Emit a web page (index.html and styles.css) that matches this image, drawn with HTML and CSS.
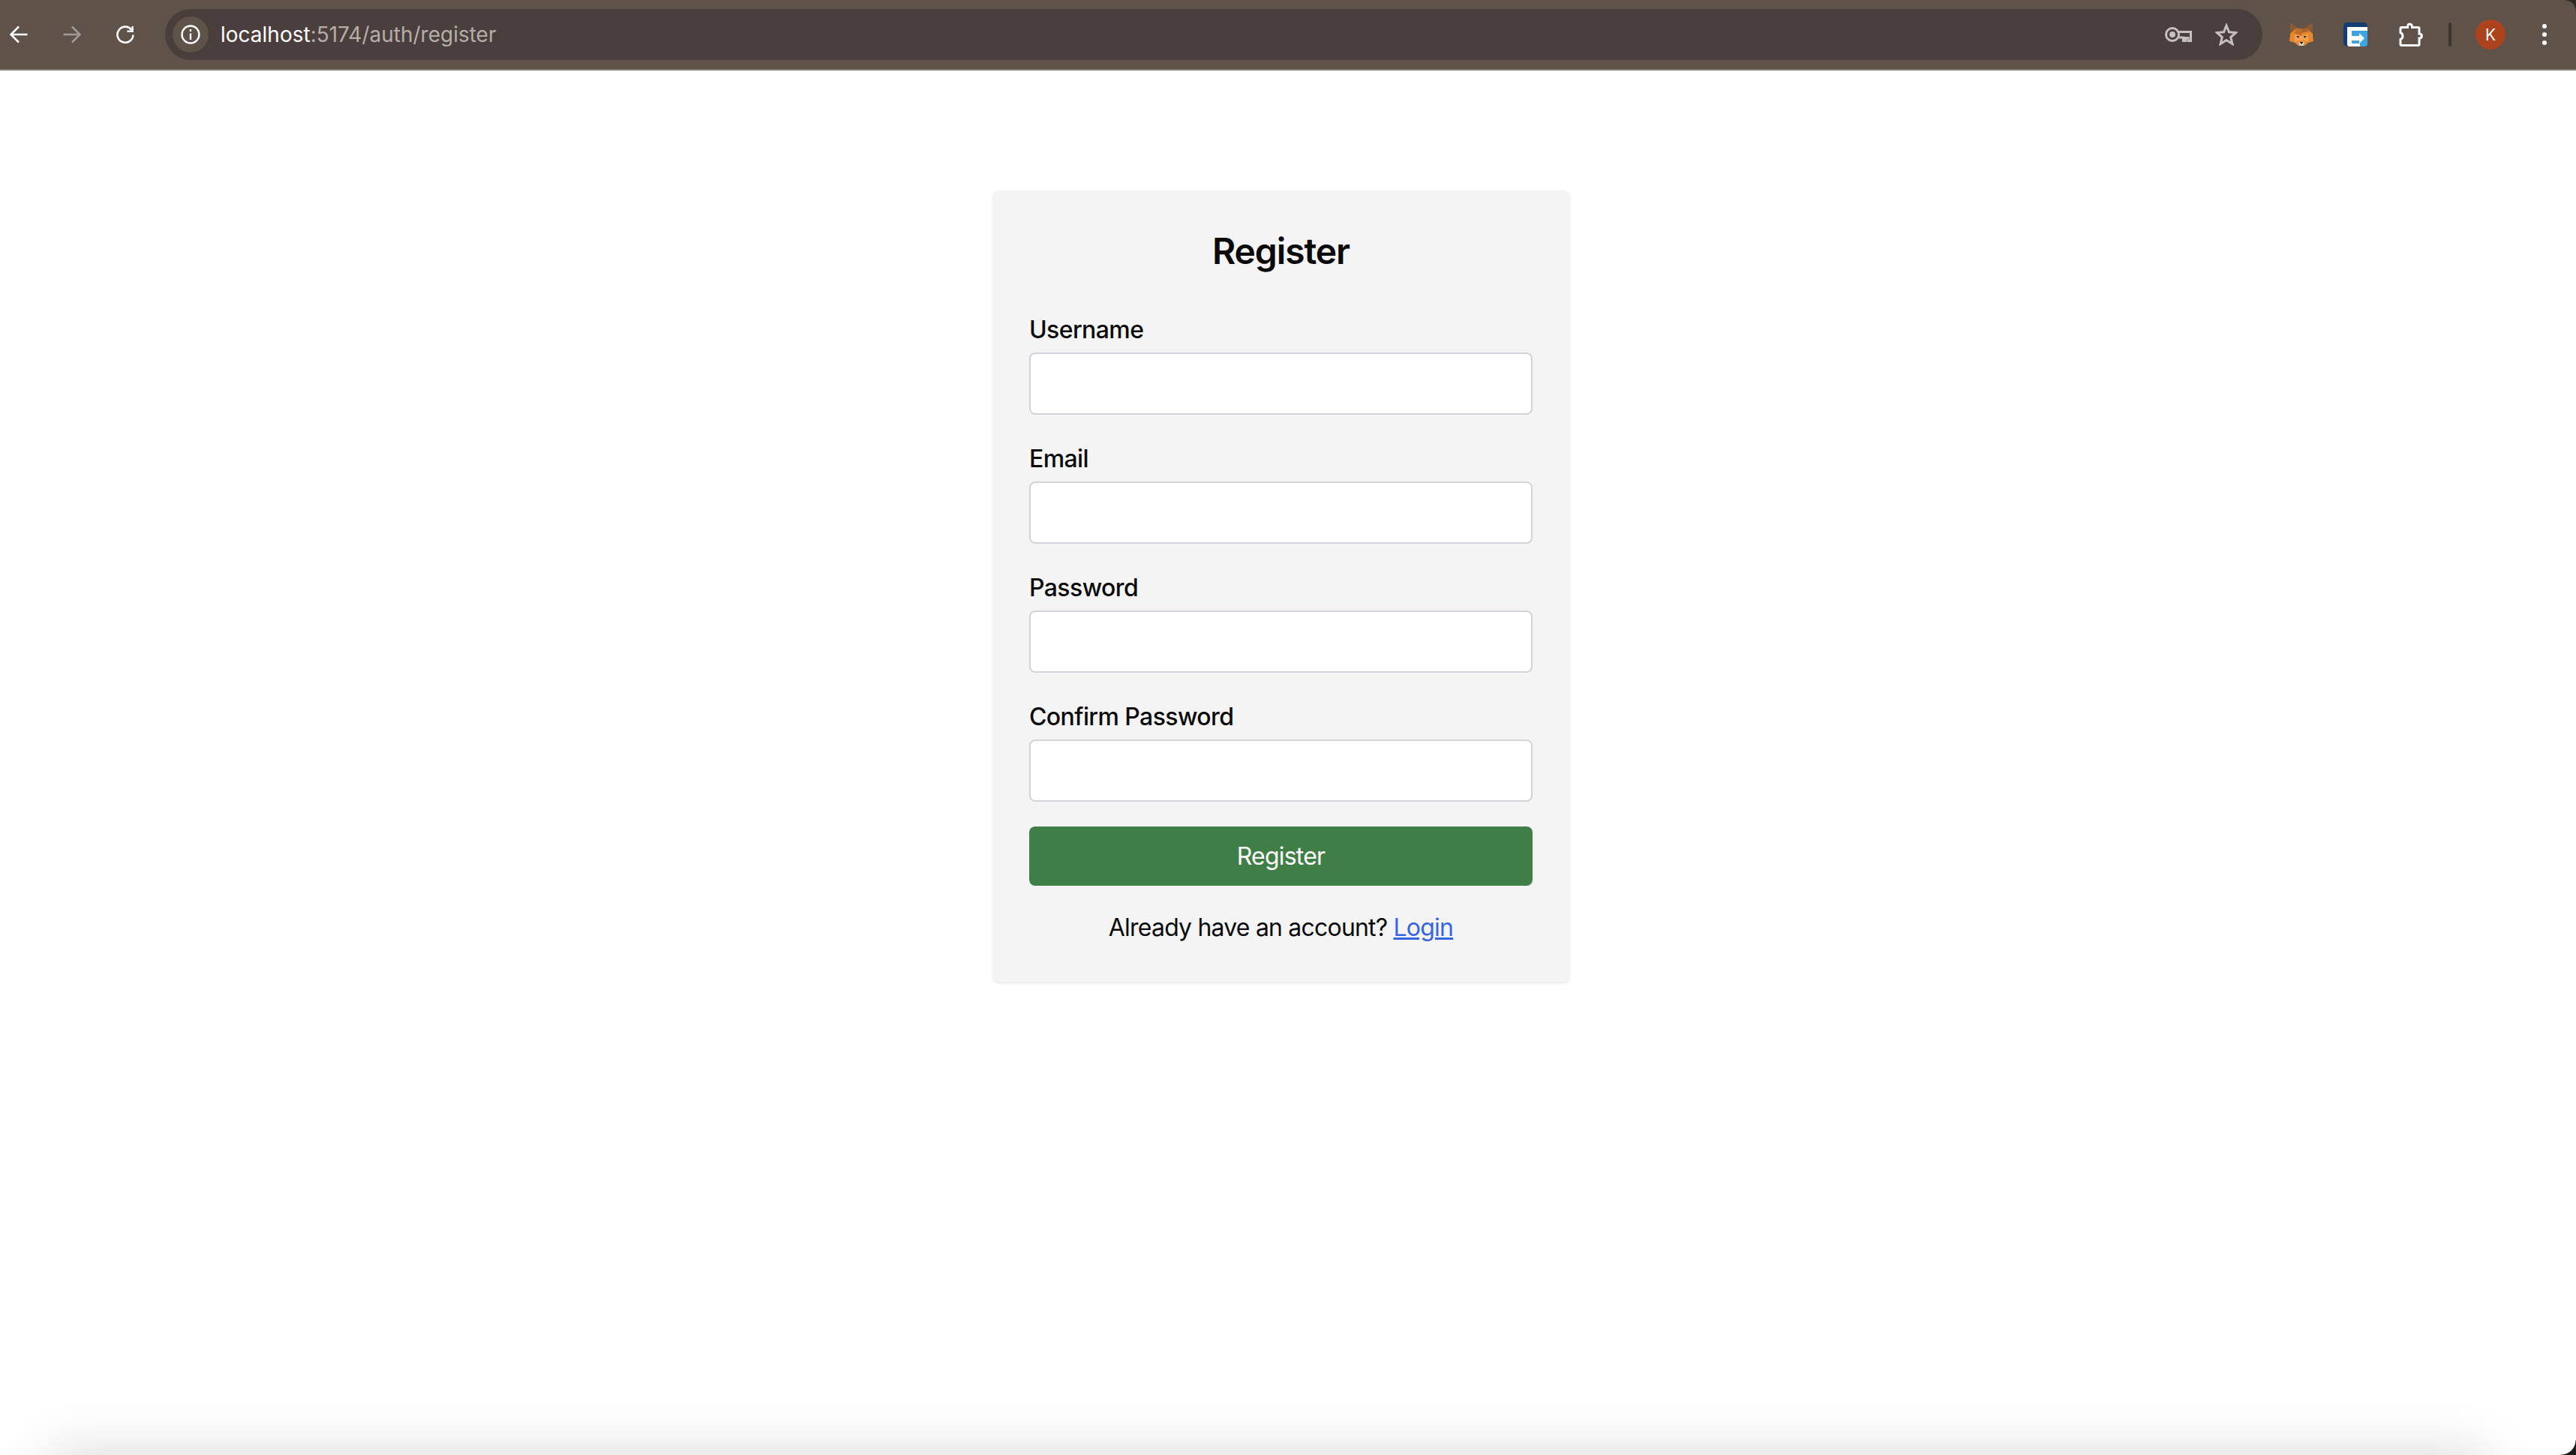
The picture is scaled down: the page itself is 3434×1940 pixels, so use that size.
FILE: index.html
```html
<!DOCTYPE html>
<html lang="en">
  <head>
    <meta charset="UTF-8" />
    <meta name="viewport" content="width=device-width, initial-scale=1.0" />
    <title>Register</title>
    <link rel="stylesheet" href="styles.css">
  </head>
  <body>
    <header class="toolbar">
      <div class="nav-buttons">
        <svg class="nav-icon" viewBox="0 0 24 24" width="24" height="24">
          <path d="M23.500 12H2M12 1.500 1.500 12 12 22.500" />
        </svg>
        <svg class="nav-icon nav-icon-off" viewBox="0 0 24 24" width="24" height="24">
          <path d="M.5 12H22M12 1.500 22.500 12 12 22.500" />
        </svg>
        <svg class="nav-icon" viewBox="0 0 24 24" width="24" height="24">
          <path d="M20.500 6A10.500 10.500 0 1 0 22.500 12.500" />
          <path class="reload-head" d="M23 1V9H14.500V6.500H20.500V1Z" />
        </svg>
      </div>

      <div class="omnibox">
        <span class="site-chip">
          <svg viewBox="0 0 26 26" width="26" height="26" class="info-icon">
            <circle cx="13" cy="13" r="11.500" />
            <path d="M13 11.500V20M13 6V9" />
          </svg>
        </span>
        <span class="url"><span class="url-host">localhost</span>:5174/auth/register</span>
        <span class="omnibox-actions">
          <svg viewBox="0 0 36 22" width="36" height="22" class="omni-icon">
            <circle cx="10" cy="11" r="8.500" />
            <circle class="key-dot" cx="10" cy="11" r="4" />
            <path d="M18.500 7.500H34.500V19.500H31V15.500H27.500V19.500H24.500V15H18.500" />
          </svg>
          <svg viewBox="0 0 30 30" width="30" height="30" class="omni-icon">
            <path d="M15 3 18.500 11.800 27.800 12.500 20.700 18.500 22.900 27.500 15 22.600 7.100 27.500 9.300 18.500 2.200 12.500 11.500 11.800Z" />
          </svg>
        </span>
      </div>

      <div class="extensions">
        <svg class="ext-icon ext-fox" viewBox="0 0 32 32" width="32" height="32">
          <path fill="#8a5a33" d="M1 0 13 8H19L31 0 31 15 16 17 1 15Z" />
          <path fill="#e8872c" d="M1 15 9 8H23L31 15 32 25 25 27 20 31H12L7 27 0 25Z" />
          <path fill="#c46d25" d="M9 8H16V18L6 15Z" />
          <path fill="#a9652c" d="M23 8H16V14L26 12Z" />
          <path fill="#f0a050" d="M16 18 25 15 25 26 19 24H13L7 26 7 15Z" />
          <path fill="#2c2a28" d="M9 18 13 18 12 21ZM23 18 19 18 20 21Z" />
          <path fill="#d9d2c8" d="M12 26H20L18.500 31H13.500Z" />
          <path fill="#1f1b18" d="M13.500 26H18.500L16 29Z" />
        </svg>
        <svg class="ext-icon ext-arrow" viewBox="0 0 32 32" width="32" height="32">
          <rect width="32" height="32" rx="5" fill="#123f73" />
          <path fill="#3fa3e0" d="M11 11H32V28A4 4 0 0 1 28 32H11Z" />
          <path fill="#fff" d="M5 6H32V11H11V28H22V32H8A3 3 0 0 1 5 29Z" />
          <path fill="#fff" d="M11 18H21V14L28 21 21 28V24H11Z" />
        </svg>
        <svg class="puzzle-icon" viewBox="0 0 32 32" width="32" height="32">
          <path d="M3.500 6.500H11.500C11.500 .5 17.500 .5 17.500 6.500H25.500C26.500 6.500 27 7 27 8V15C31.500 15 31.500 21 27 21V29C27 30 26.500 30.500 25.500 30.500H3.500C2.500 30.500 2 30 2 29V22.500C6 21 6 15 2 13.500V8C2 7 2.500 6.500 3.500 6.500Z" />
        </svg>
        <span class="ext-divider"></span>
        <span class="avatar">K</span>
        <span class="menu-dots"><i></i><i></i><i></i></span>
      </div>
    </header>

    <main class="page">
      <form class="card">
        <h2 class="card-title">Register</h2>
        <div class="field">
          <label for="username">Username</label>
          <input id="username" type="text" />
        </div>
        <div class="field">
          <label for="email">Email</label>
          <input id="email" type="email" />
        </div>
        <div class="field">
          <label for="password">Password</label>
          <input id="password" type="password" />
        </div>
        <div class="field field-last">
          <label for="confirm">Confirm Password</label>
          <input id="confirm" type="password" />
        </div>
        <button type="button" class="submit">Register</button>
        <p class="login-line">Already have an account? <a href="#">Login</a></p>
      </form>
    </main>

    <div class="bottom-shade"></div>
    <div class="corner corner-top"></div>
    <div class="corner corner-bottom"></div>
  </body>
</html>
```

FILE: styles.css
```css
* {
  box-sizing: border-box;
  margin: 0;
  padding: 0;
}
html,
body {
  height: 100%;
}
body {
  position: relative;
  overflow: hidden;
  background: #fff;
  color: #0a0a0a;
  font-family: Inter, "Liberation Sans", sans-serif;
}

.toolbar {
  display: flex;
  align-items: center;
  height: 94px;
  background: #5f5249;
  border-bottom: 2px solid #85796f;
}
.nav-buttons {
  display: flex;
  align-items: center;
  gap: 47px;
  width: 220px;
  padding-left: 13px;
}
.nav-icon {
  flex: none;
  fill: none;
  stroke: #fff;
  stroke-width: 2.600;
}
.nav-icon-off {
  stroke: #a39a92;
}
.reload-head {
  fill: #fff;
  stroke: none;
}

.omnibox {
  display: flex;
  align-items: center;
  width: 2796px;
  height: 68px;
  padding: 0 33px 0 10px;
  background: #4b3f3d;
  border-radius: 34px;
}
.site-chip {
  display: flex;
  align-items: center;
  justify-content: center;
  width: 48px;
  height: 48px;
  background: #5f5249;
  border-radius: 50%;
}
.info-icon {
  fill: none;
  stroke: #fff;
  stroke-width: 2.400;
}
.url {
  margin-left: 16px;
  font-size: 28px;
  color: #b5adaa;
}
.url-host {
  color: #fff;
}
.omnibox-actions {
  display: flex;
  align-items: center;
  gap: 31px;
  margin-left: auto;
}
.omni-icon {
  fill: none;
  stroke: #c4c0be;
  stroke-width: 3;
}
.omni-icon .key-dot {
  fill: #c4c0be;
  stroke: none;
}

.extensions {
  display: flex;
  align-items: center;
  margin-left: 36px;
}
.ext-icon,
.puzzle-icon {
  flex: none;
}
.ext-fox {
  margin-right: 40px;
}
.ext-arrow {
  margin-right: 42px;
}
.puzzle-icon {
  fill: none;
  stroke: #fff;
  stroke-width: 3;
}
.ext-divider {
  width: 4px;
  height: 32px;
  margin: 0 32px 0 34px;
  background: #3f3530;
  border-radius: 2px;
}
.avatar {
  display: flex;
  align-items: center;
  justify-content: center;
  width: 40px;
  height: 40px;
  background: #ad421e;
  border-radius: 50%;
  color: #fff;
  font-size: 21px;
}
.menu-dots {
  display: flex;
  flex-direction: column;
  gap: 5px;
  margin-left: 49px;
}
.menu-dots i {
  width: 6px;
  height: 6px;
  background: #fff;
  border-radius: 50%;
}

.page {
  display: flex;
  justify-content: center;
  padding: 160px 18px 0 0;
}
.card {
  display: flex;
  flex-direction: column;
  width: 768px;
  height: 1055px;
  padding: 49px 49px 48px 48px;
  background: #f4f4f4;
  border-radius: 8px;
  box-shadow: 0 2px 4px rgba(0, 0, 0, 0.1);
}
.card-title {
  margin-bottom: 49px;
  font-size: 48px;
  line-height: 64px;
  font-weight: 600;
  letter-spacing: -1.100px;
  text-align: center;
}
.field {
  display: flex;
  flex-direction: column;
  gap: 6px;
  margin-bottom: 35px;
}
.field-last {
  margin-bottom: 33px;
}
.field label {
  font-size: 32px;
  line-height: 48px;
  font-weight: 500;
  letter-spacing: -0.600px;
}
.field input {
  width: 100%;
  height: 83px;
  background: #fff;
  border: 2px solid #d1d5db;
  border-radius: 8px;
}
.submit {
  height: 80px;
  background: #3f7f47;
  border: none;
  border-radius: 8px;
  color: #fff;
  font-family: inherit;
  font-size: 32px;
  letter-spacing: -0.800px;
  cursor: pointer;
}
.login-line {
  margin-top: 32px;
  font-size: 32px;
  line-height: 48px;
  letter-spacing: -0.800px;
  text-align: center;
}
.login-line a {
  color: #3864e4;
}

.bottom-shade {
  position: absolute;
  left: 65px;
  right: 120px;
  bottom: -80px;
  height: 80px;
  box-shadow: 0 0 75px rgba(0, 0, 0, 0.16);
}
.corner {
  position: absolute;
  right: 0;
  width: 14px;
  height: 14px;
}
.corner-top {
  top: 0;
  background: radial-gradient(circle at 0 100%, transparent 13px, #2f2925 14px);
}
.corner-bottom {
  bottom: 0;
  width: 20px;
  height: 20px;
  background: radial-gradient(circle at 0 0, transparent 19px, #1c1c1c 20px);
}
```
